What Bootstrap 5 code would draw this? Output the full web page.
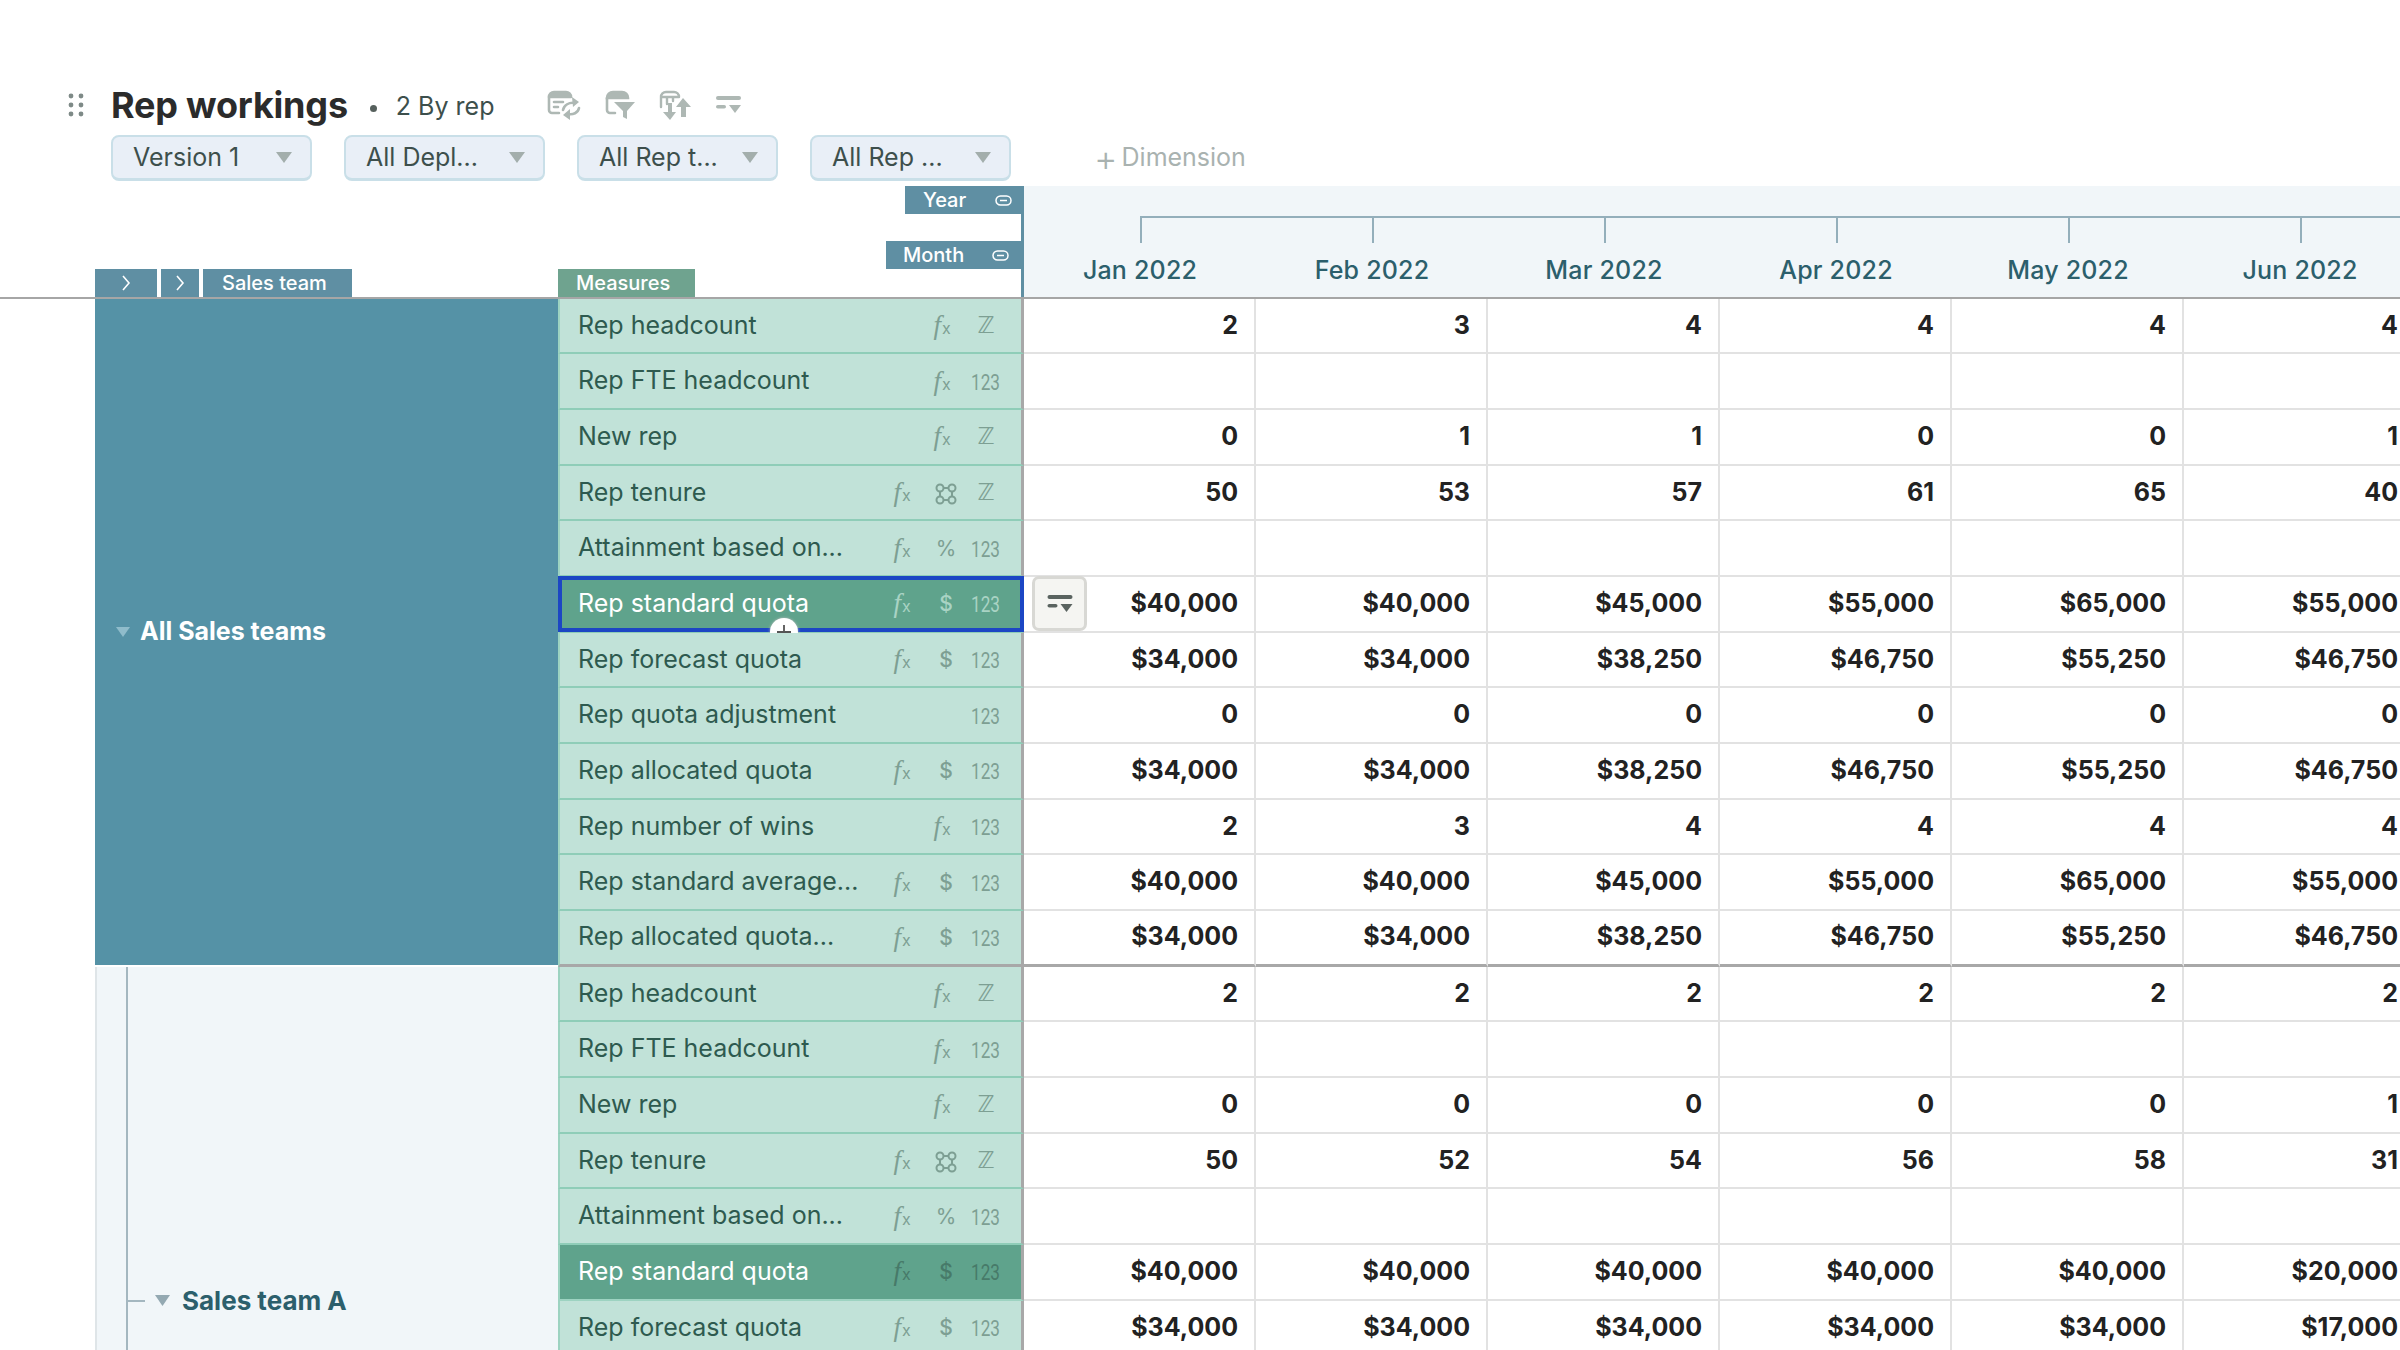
<!doctype html>
<html lang="en"><head><meta charset="utf-8"><title>Rep workings</title>
<link href="https://cdn.jsdelivr.net/npm/bootstrap@5.3.0/dist/css/bootstrap.min.css" rel="stylesheet">
<style>
html,body{height:1350px;overflow:hidden;background:#fff}
body{font-family:Inter,"Liberation Sans",sans-serif;font-size:25px;color:#2e5a4f;width:2400px}
.titlebar{height:44px;margin-top:83px;padding-left:68px}
.grip{width:16px;height:24px;margin-right:27px}
.ttl{font-size:36px;font-weight:700;color:#2b2b2b;line-height:44px;margin:0;letter-spacing:-.2px}
.sep-dot{width:7px;height:7px;border-radius:50%;background:#56605d;margin:6px 19px 0 22px}
.subt{color:#3d4f4c;font-size:25px;margin-top:4px}
.topicons{margin-left:53px;gap:24px}
.chipbar{height:46px;margin-top:8px;padding-left:111px;gap:32px}
.chip-f{width:201px;height:46px;background:#e9eff7;border:2px solid #c9dfe8;border-bottom-width:3px;border-radius:8px;color:#3d4f4c;font-size:25px;padding:0 18px 0 20px;line-height:1}
.chip-f:hover{background:#e9eff7;color:#3d4f4c}
.addm{color:#a9b2b0;font-size:25px;margin-left:51px}
.addm b{font-weight:300;font-size:36px;line-height:1;margin-right:4px}
.headz{height:112.7px;margin-top:5px;border-bottom:2.5px solid #a6a6a6}
.headl{width:1024px;padding-left:95px;border-right:3px solid #5f8fa3}
.tg{height:28px;background:#5f8fa3;color:#fff;font-size:20px;font-weight:500;line-height:28px}
.tg-y{width:119px;margin-left:auto;margin-right:-3px;padding-left:18px;margin-bottom:27px}
.tg-m{width:135px;margin-left:auto;padding-left:17px}
.tg svg{margin-left:auto;margin-right:12px}
.tg-c1{width:62px;margin-right:4px}.tg-c2{width:38px;margin-right:4px}
.tg-s{width:149px;padding-left:19px;margin-right:206px}
.tg-me{width:137px;padding-left:18px;background:#6fa38f}
.headr{background:#f1f6f9}
.mth{width:232px;padding-top:30px;color:#2c5f6c;font-weight:500}
.brk{height:27px;border-top:2.5px solid #94afbb}
.brk-a{margin-left:50%}
.tick{height:100%;width:2px;background:#94afbb;margin-left:50%}
.brk-a .tick{margin-left:0}
.mlabel{margin-top:9px;line-height:36px;letter-spacing:.2px}
.treec{width:463px;margin-left:95px}
.blk{height:668px}
.blk-a{background:#5592a6;color:#fff;font-weight:700;padding-left:21px;margin-bottom:2px;height:666px}
.blk-b{background:#f1f6f9;border-left:2px solid #dfe5e8;padding-left:29px}
.vln{border-left:2px solid #a4b7c0;height:100%;color:#2c5f6c;font-weight:700;font-size:26px}
.hz{width:17px;height:2px;background:#a4b7c0;margin-right:10px}
.ldn{margin-right:12px}
.ldn-w{margin-right:10px}
.rw{height:55.67px}
.mc{width:466px;background:#c1e2d8;border-left:2px solid #9dd3c1;border-right:3px solid #a8a8a8;border-bottom:2px solid #8fcdb8;padding-left:18px;padding-right:15px;position:relative;color:#2e5a4f}
.mname{margin-right:auto;white-space:nowrap}
.dc{width:232px;border-right:2px solid #e2e2e2;border-bottom:2px solid #e2e2e2;font-weight:700;color:#222;padding:0 16px 0 8px;flex-shrink:0}
.end-g .mc,.end-g .dc{border-bottom:3px solid #a8a8a8}
.ic{width:40px;text-align:center;color:#7d9f93;line-height:1;flex-shrink:0}
.ifx{margin-right:4px;font-family:"Liberation Serif",serif;font-size:27px;font-style:italic}
.ifx span{font-family:Inter,sans-serif;font-style:normal;font-size:16px;margin-left:1px}
.izz{font-family:"DejaVu Sans",sans-serif;font-size:23px}
.inum{font-family:Roboto,sans-serif;font-size:22px;display:inline-block;transform:scaleX(.78);letter-spacing:0}
.ipc{font-size:21px}.idl{font-size:21px;font-weight:500}
.sel-a{background:#5fa38c;color:#fff}
.sel-a .ic{color:#a9d3c4}
.sel-b{background:#5fa38c;color:#fff;border-bottom-color:#9dd3c1}
.sel-b .ic{color:#477a69}
.focus-box{position:absolute;inset:-1px -3px -1px -2px;border:4px solid #1c46c4;pointer-events:none}
.plus-c{position:absolute;left:210px;bottom:-15px;width:28px;height:28px;background:#fff;border-radius:50%;box-shadow:0 0 3px #bbb;color:#555}
.mini-b{width:55px;height:55px;background:#f5f5f2;border:3.5px solid #d8d8d4;border-radius:7px}
</style></head><body>
<div class="d-flex align-items-center titlebar">
 <svg class="grip flex-shrink-0" viewBox="0 0 16 24" fill="#7e8a87"><circle cx="3" cy="3" r="2.4"/><circle cx="13" cy="3" r="2.4"/><circle cx="3" cy="12" r="2.4"/><circle cx="13" cy="12" r="2.4"/><circle cx="3" cy="21" r="2.4"/><circle cx="13" cy="21" r="2.4"/></svg>
 <h1 class="ttl">Rep workings</h1><span class="sep-dot"></span><span class="subt">2 By rep</span>
 <div class="d-flex align-items-center topicons">
  <svg width="34" height="30" viewBox="0 0 34 30" fill="none" stroke="#aeb8b4" stroke-width="2.6" stroke-linecap="round" stroke-linejoin="round"><path d="M2 7v13a3 3 0 0 0 3 3h7" /><path d="M2 7a5 5 0 0 1 5-5h12a5 5 0 0 1 5 5z" fill="#aeb8b4"/><path d="M7 12h9M7 17h4"/><path d="M16 20c1-5 6-8 12-7" /><path d="M25 7l7 5-6 5z" fill="#aeb8b4" stroke="none"/><path d="M32 18c-1 5-6 7-11 6"/><path d="M23 19l-7 6 7 5z" fill="#aeb8b4" stroke="none"/></svg>
  <svg width="30" height="30" viewBox="0 0 30 30" fill="none" stroke="#aeb8b4" stroke-width="2.6" stroke-linecap="round"><path d="M2 8v12a3 3 0 0 0 3 3h5"/><path d="M2 8a6 6 0 0 1 6-6h9a6 6 0 0 1 6 6z" fill="#aeb8b4"/><path d="M9 12h21l-8 9v8l-4-2v-6z" fill="#aeb8b4" stroke="none"/></svg>
  <svg width="33" height="30" viewBox="0 0 33 30" fill="none" stroke="#aeb8b4" stroke-width="2.4" stroke-linecap="round"><path d="M2 7a5 5 0 0 1 5-5h8a5 5 0 0 1 5 5M2 7h18M2 7v10M8 7v7M14 7v4"/><path d="M24 8l8 9h-5v10h-5V17h-5z" fill="#aeb8b4" stroke="none"/><path d="M9 13h4v9h4l-6 8-7-8h5z" fill="#aeb8b4" stroke="none"/></svg>
  <svg width="25" height="18" viewBox="0 0 25 18" fill="#aeb8b4"><rect x="0" y="0" width="25" height="4" rx="2"/><rect x="0" y="9" width="10" height="3.6" rx="1.8"/><path d="M13 9h12l-6 8z"/></svg>
 </div>
</div>
<div class="d-flex align-items-center chipbar">
 <button class="btn chip-f d-flex align-items-center justify-content-between" type="button"><span>Version 1</span><svg width="16" height="11" viewBox="0 0 16 11"><path d="M0 0h16l-8 11z" fill="#a3aeac"/></svg></button>
 <button class="btn chip-f d-flex align-items-center justify-content-between" type="button"><span>All Depl...</span><svg width="16" height="11" viewBox="0 0 16 11"><path d="M0 0h16l-8 11z" fill="#a3aeac"/></svg></button>
 <button class="btn chip-f d-flex align-items-center justify-content-between" type="button"><span>All Rep t...</span><svg width="16" height="11" viewBox="0 0 16 11"><path d="M0 0h16l-8 11z" fill="#a3aeac"/></svg></button>
 <button class="btn chip-f d-flex align-items-center justify-content-between" type="button"><span>All Rep ...</span><svg width="16" height="11" viewBox="0 0 16 11"><path d="M0 0h16l-8 11z" fill="#a3aeac"/></svg></button>
 <span class="addm d-flex align-items-center"><b>+</b>Dimension</span>
</div>
<div class="d-flex headz">
 <div class="headl flex-shrink-0 d-flex flex-column">
  <div class="tg tg-y d-flex align-items-center">Year<svg width="17" height="11" viewBox="0 0 17 11" fill="none" stroke="#fff" stroke-width="1.5"><rect x="1" y="1" width="15" height="9" rx="4.5"/><path d="M5 5.5h7"/></svg></div>
  <div class="tg tg-m d-flex align-items-center">Month<svg width="17" height="11" viewBox="0 0 17 11" fill="none" stroke="#fff" stroke-width="1.5"><rect x="1" y="1" width="15" height="9" rx="4.5"/><path d="M5 5.5h7"/></svg></div>
  <div class="d-flex">
   <div class="tg tg-c1 d-flex align-items-center justify-content-center"><svg class="m-0" width="9" height="16" viewBox="0 0 9 16" fill="none" stroke="#fff" stroke-width="1.6"><path d="M1 1l6 7-6 7"/></svg></div>
   <div class="tg tg-c2 d-flex align-items-center justify-content-center"><svg class="m-0" width="9" height="16" viewBox="0 0 9 16" fill="none" stroke="#fff" stroke-width="1.6"><path d="M1 1l6 7-6 7"/></svg></div>
   <div class="tg tg-s">Sales team</div>
   <div class="tg tg-me">Measures</div>
  </div>
 </div>
 <div class="headr flex-grow-1 d-flex overflow-hidden">
  <div class="mth flex-shrink-0 text-center"><div class="brk brk-a"><div class="tick"></div></div><div class="mlabel">Jan 2022</div></div>
  <div class="mth flex-shrink-0 text-center"><div class="brk"><div class="tick"></div></div><div class="mlabel">Feb 2022</div></div>
  <div class="mth flex-shrink-0 text-center"><div class="brk"><div class="tick"></div></div><div class="mlabel">Mar 2022</div></div>
  <div class="mth flex-shrink-0 text-center"><div class="brk"><div class="tick"></div></div><div class="mlabel">Apr 2022</div></div>
  <div class="mth flex-shrink-0 text-center"><div class="brk"><div class="tick"></div></div><div class="mlabel">May 2022</div></div>
  <div class="mth flex-shrink-0 text-center"><div class="brk"><div class="tick"></div></div><div class="mlabel">Jun 2022</div></div>
 </div>
</div>
<div class="d-flex">
 <div class="treec flex-shrink-0">
  <div class="blk blk-a d-flex align-items-center"><svg class="ldn-w" width="14" height="10" viewBox="0 0 14 10"><path d="M0 0h14l-7 10z" fill="#8fbccb"/></svg>All Sales teams</div>
  <div class="blk blk-b"><div class="vln d-flex align-items-center"><span class="hz"></span><svg class="ldn" width="15" height="11" viewBox="0 0 15 11"><path d="M0 0h15l-7.500 11z" fill="#94a9b2"/></svg>Sales team A</div></div>
 </div>
 <div class="flex-shrink-0">
  <div class="rw d-flex"><div class="mc d-flex align-items-center"><span class="mname">Rep headcount</span><span class="ic ifx"><i>f</i><span>x</span></span><span class="ic izz">ℤ</span></div><div class="dc d-flex align-items-center justify-content-end">2</div><div class="dc d-flex align-items-center justify-content-end">3</div><div class="dc d-flex align-items-center justify-content-end">4</div><div class="dc d-flex align-items-center justify-content-end">4</div><div class="dc d-flex align-items-center justify-content-end">4</div><div class="dc d-flex align-items-center justify-content-end">4</div></div>
  <div class="rw d-flex"><div class="mc d-flex align-items-center"><span class="mname">Rep FTE headcount</span><span class="ic ifx"><i>f</i><span>x</span></span><span class="ic"><span class="inum">123</span></span></div><div class="dc"></div><div class="dc"></div><div class="dc"></div><div class="dc"></div><div class="dc"></div><div class="dc"></div></div>
  <div class="rw d-flex"><div class="mc d-flex align-items-center"><span class="mname">New rep</span><span class="ic ifx"><i>f</i><span>x</span></span><span class="ic izz">ℤ</span></div><div class="dc d-flex align-items-center justify-content-end">0</div><div class="dc d-flex align-items-center justify-content-end">1</div><div class="dc d-flex align-items-center justify-content-end">1</div><div class="dc d-flex align-items-center justify-content-end">0</div><div class="dc d-flex align-items-center justify-content-end">0</div><div class="dc d-flex align-items-center justify-content-end">1</div></div>
  <div class="rw d-flex"><div class="mc d-flex align-items-center"><span class="mname">Rep tenure</span><span class="ic ifx"><i>f</i><span>x</span></span><span class="ic"><svg width="22" height="22" viewBox="0 0 22 22" fill="none" stroke="#7d9f93" stroke-width="2"><circle cx="5" cy="5" r="3.500"/><circle cx="17" cy="5" r="3.500"/><circle cx="5" cy="17" r="3.500"/><circle cx="17" cy="17" r="3.500"/><path d="M8.500 5h5M8.500 17h5M5 8.500v5M17 8.500v5"/></svg></span><span class="ic izz">ℤ</span></div><div class="dc d-flex align-items-center justify-content-end">50</div><div class="dc d-flex align-items-center justify-content-end">53</div><div class="dc d-flex align-items-center justify-content-end">57</div><div class="dc d-flex align-items-center justify-content-end">61</div><div class="dc d-flex align-items-center justify-content-end">65</div><div class="dc d-flex align-items-center justify-content-end">40</div></div>
  <div class="rw d-flex"><div class="mc d-flex align-items-center"><span class="mname">Attainment based on...</span><span class="ic ifx"><i>f</i><span>x</span></span><span class="ic ipc">%</span><span class="ic"><span class="inum">123</span></span></div><div class="dc"></div><div class="dc"></div><div class="dc"></div><div class="dc"></div><div class="dc"></div><div class="dc"></div></div>
  <div class="rw d-flex"><div class="mc sel-a d-flex align-items-center"><span class="mname">Rep standard quota</span><span class="ic ifx"><i>f</i><span>x</span></span><span class="ic idl">$</span><span class="ic"><span class="inum">123</span></span><div class="focus-box"></div><div class="plus-c d-flex align-items-center justify-content-center"><svg width="16" height="16" viewBox="0 0 16 16" stroke="#555" stroke-width="1.800"><path d="M8 1v14M1 8h14"/></svg></div></div><div class="dc d-flex align-items-center justify-content-between"><div class="mini-b d-flex align-items-center justify-content-center"><svg width="28" height="18" viewBox="0 0 25 18" fill="#5a6360"><rect x="0" y="0" width="25" height="4" rx="2"/><rect x="0" y="9" width="10" height="3.600" rx="1.800"/><path d="M13 9h12l-6 8z"/></svg></div>$40,000</div><div class="dc d-flex align-items-center justify-content-end">$40,000</div><div class="dc d-flex align-items-center justify-content-end">$45,000</div><div class="dc d-flex align-items-center justify-content-end">$55,000</div><div class="dc d-flex align-items-center justify-content-end">$65,000</div><div class="dc d-flex align-items-center justify-content-end">$55,000</div></div>
  <div class="rw d-flex"><div class="mc d-flex align-items-center"><span class="mname">Rep forecast quota</span><span class="ic ifx"><i>f</i><span>x</span></span><span class="ic idl">$</span><span class="ic"><span class="inum">123</span></span></div><div class="dc d-flex align-items-center justify-content-end">$34,000</div><div class="dc d-flex align-items-center justify-content-end">$34,000</div><div class="dc d-flex align-items-center justify-content-end">$38,250</div><div class="dc d-flex align-items-center justify-content-end">$46,750</div><div class="dc d-flex align-items-center justify-content-end">$55,250</div><div class="dc d-flex align-items-center justify-content-end">$46,750</div></div>
  <div class="rw d-flex"><div class="mc d-flex align-items-center"><span class="mname">Rep quota adjustment</span><span class="ic"><span class="inum">123</span></span></div><div class="dc d-flex align-items-center justify-content-end">0</div><div class="dc d-flex align-items-center justify-content-end">0</div><div class="dc d-flex align-items-center justify-content-end">0</div><div class="dc d-flex align-items-center justify-content-end">0</div><div class="dc d-flex align-items-center justify-content-end">0</div><div class="dc d-flex align-items-center justify-content-end">0</div></div>
  <div class="rw d-flex"><div class="mc d-flex align-items-center"><span class="mname">Rep allocated quota</span><span class="ic ifx"><i>f</i><span>x</span></span><span class="ic idl">$</span><span class="ic"><span class="inum">123</span></span></div><div class="dc d-flex align-items-center justify-content-end">$34,000</div><div class="dc d-flex align-items-center justify-content-end">$34,000</div><div class="dc d-flex align-items-center justify-content-end">$38,250</div><div class="dc d-flex align-items-center justify-content-end">$46,750</div><div class="dc d-flex align-items-center justify-content-end">$55,250</div><div class="dc d-flex align-items-center justify-content-end">$46,750</div></div>
  <div class="rw d-flex"><div class="mc d-flex align-items-center"><span class="mname">Rep number of wins</span><span class="ic ifx"><i>f</i><span>x</span></span><span class="ic"><span class="inum">123</span></span></div><div class="dc d-flex align-items-center justify-content-end">2</div><div class="dc d-flex align-items-center justify-content-end">3</div><div class="dc d-flex align-items-center justify-content-end">4</div><div class="dc d-flex align-items-center justify-content-end">4</div><div class="dc d-flex align-items-center justify-content-end">4</div><div class="dc d-flex align-items-center justify-content-end">4</div></div>
  <div class="rw d-flex"><div class="mc d-flex align-items-center"><span class="mname">Rep standard average...</span><span class="ic ifx"><i>f</i><span>x</span></span><span class="ic idl">$</span><span class="ic"><span class="inum">123</span></span></div><div class="dc d-flex align-items-center justify-content-end">$40,000</div><div class="dc d-flex align-items-center justify-content-end">$40,000</div><div class="dc d-flex align-items-center justify-content-end">$45,000</div><div class="dc d-flex align-items-center justify-content-end">$55,000</div><div class="dc d-flex align-items-center justify-content-end">$65,000</div><div class="dc d-flex align-items-center justify-content-end">$55,000</div></div>
  <div class="rw end-g d-flex"><div class="mc d-flex align-items-center"><span class="mname">Rep allocated quota...</span><span class="ic ifx"><i>f</i><span>x</span></span><span class="ic idl">$</span><span class="ic"><span class="inum">123</span></span></div><div class="dc d-flex align-items-center justify-content-end">$34,000</div><div class="dc d-flex align-items-center justify-content-end">$34,000</div><div class="dc d-flex align-items-center justify-content-end">$38,250</div><div class="dc d-flex align-items-center justify-content-end">$46,750</div><div class="dc d-flex align-items-center justify-content-end">$55,250</div><div class="dc d-flex align-items-center justify-content-end">$46,750</div></div>
  <div class="rw d-flex"><div class="mc d-flex align-items-center"><span class="mname">Rep headcount</span><span class="ic ifx"><i>f</i><span>x</span></span><span class="ic izz">ℤ</span></div><div class="dc d-flex align-items-center justify-content-end">2</div><div class="dc d-flex align-items-center justify-content-end">2</div><div class="dc d-flex align-items-center justify-content-end">2</div><div class="dc d-flex align-items-center justify-content-end">2</div><div class="dc d-flex align-items-center justify-content-end">2</div><div class="dc d-flex align-items-center justify-content-end">2</div></div>
  <div class="rw d-flex"><div class="mc d-flex align-items-center"><span class="mname">Rep FTE headcount</span><span class="ic ifx"><i>f</i><span>x</span></span><span class="ic"><span class="inum">123</span></span></div><div class="dc"></div><div class="dc"></div><div class="dc"></div><div class="dc"></div><div class="dc"></div><div class="dc"></div></div>
  <div class="rw d-flex"><div class="mc d-flex align-items-center"><span class="mname">New rep</span><span class="ic ifx"><i>f</i><span>x</span></span><span class="ic izz">ℤ</span></div><div class="dc d-flex align-items-center justify-content-end">0</div><div class="dc d-flex align-items-center justify-content-end">0</div><div class="dc d-flex align-items-center justify-content-end">0</div><div class="dc d-flex align-items-center justify-content-end">0</div><div class="dc d-flex align-items-center justify-content-end">0</div><div class="dc d-flex align-items-center justify-content-end">1</div></div>
  <div class="rw d-flex"><div class="mc d-flex align-items-center"><span class="mname">Rep tenure</span><span class="ic ifx"><i>f</i><span>x</span></span><span class="ic"><svg width="22" height="22" viewBox="0 0 22 22" fill="none" stroke="#7d9f93" stroke-width="2"><circle cx="5" cy="5" r="3.500"/><circle cx="17" cy="5" r="3.500"/><circle cx="5" cy="17" r="3.500"/><circle cx="17" cy="17" r="3.500"/><path d="M8.500 5h5M8.500 17h5M5 8.500v5M17 8.500v5"/></svg></span><span class="ic izz">ℤ</span></div><div class="dc d-flex align-items-center justify-content-end">50</div><div class="dc d-flex align-items-center justify-content-end">52</div><div class="dc d-flex align-items-center justify-content-end">54</div><div class="dc d-flex align-items-center justify-content-end">56</div><div class="dc d-flex align-items-center justify-content-end">58</div><div class="dc d-flex align-items-center justify-content-end">31</div></div>
  <div class="rw d-flex"><div class="mc d-flex align-items-center"><span class="mname">Attainment based on...</span><span class="ic ifx"><i>f</i><span>x</span></span><span class="ic ipc">%</span><span class="ic"><span class="inum">123</span></span></div><div class="dc"></div><div class="dc"></div><div class="dc"></div><div class="dc"></div><div class="dc"></div><div class="dc"></div></div>
  <div class="rw d-flex"><div class="mc sel-b d-flex align-items-center"><span class="mname">Rep standard quota</span><span class="ic ifx"><i>f</i><span>x</span></span><span class="ic idl">$</span><span class="ic"><span class="inum">123</span></span></div><div class="dc d-flex align-items-center justify-content-end">$40,000</div><div class="dc d-flex align-items-center justify-content-end">$40,000</div><div class="dc d-flex align-items-center justify-content-end">$40,000</div><div class="dc d-flex align-items-center justify-content-end">$40,000</div><div class="dc d-flex align-items-center justify-content-end">$40,000</div><div class="dc d-flex align-items-center justify-content-end">$20,000</div></div>
  <div class="rw d-flex"><div class="mc d-flex align-items-center"><span class="mname">Rep forecast quota</span><span class="ic ifx"><i>f</i><span>x</span></span><span class="ic idl">$</span><span class="ic"><span class="inum">123</span></span></div><div class="dc d-flex align-items-center justify-content-end">$34,000</div><div class="dc d-flex align-items-center justify-content-end">$34,000</div><div class="dc d-flex align-items-center justify-content-end">$34,000</div><div class="dc d-flex align-items-center justify-content-end">$34,000</div><div class="dc d-flex align-items-center justify-content-end">$34,000</div><div class="dc d-flex align-items-center justify-content-end">$17,000</div></div>
 </div>
</div>
<script src="https://cdn.jsdelivr.net/npm/bootstrap@5.3.0/dist/js/bootstrap.bundle.min.js"></script>
</body></html>
